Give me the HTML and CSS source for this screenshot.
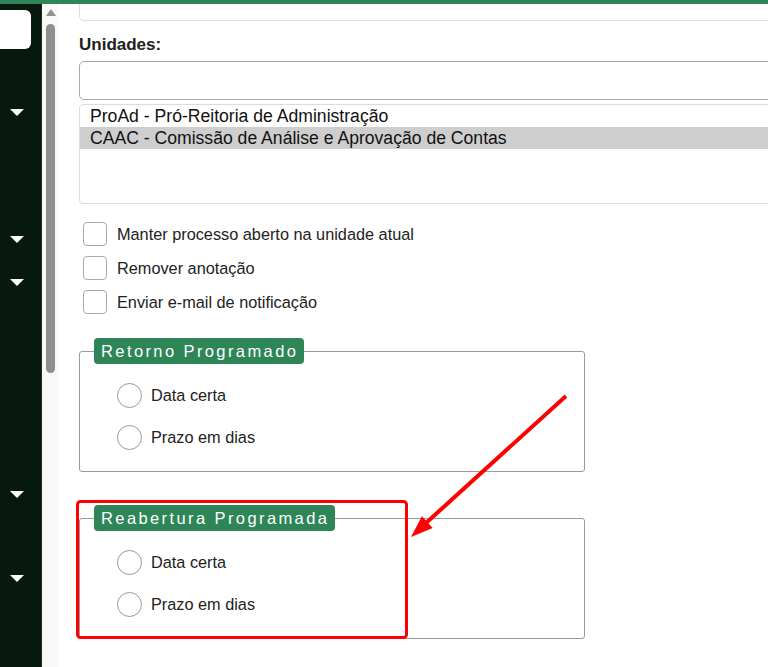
FILE: index.html
```html
<!DOCTYPE html>
<html lang="pt-BR">
<head>
  <meta charset="UTF-8">
  <meta name="viewport" content="width=device-width, initial-scale=1.0">
  <title>Enviar Processo</title>
  <link rel="stylesheet" href="styles.css">
</head>
<body>
  <div class="topbar"></div>

  <div class="layout">
    <nav class="sidebar">
      <div class="sidebar-search"></div>
      <div class="menu-item"></div>
      <div class="menu-item"><span class="caret"></span></div>
      <div class="menu-item"></div>
      <div class="menu-item"></div>
      <div class="menu-item"><span class="caret"></span></div>
      <div class="menu-item"><span class="caret"></span></div>
      <div class="menu-item"></div>
      <div class="menu-item"></div>
      <div class="menu-item"></div>
      <div class="menu-item"></div>
      <div class="menu-item"><span class="caret"></span></div>
      <div class="menu-item"></div>
      <div class="menu-item"><span class="caret"></span></div>
      <div class="menu-item"></div>
    </nav>

    <div class="gutter">
      <span class="gutter-arrow"></span>
      <span class="gutter-thumb"></span>
    </div>

    <main class="content">
      <div class="prev-input"></div>

      <label class="field-label" for="unitSearch">Unidades:</label>
      <input type="text" id="unitSearch" class="unit-search">

      <div class="unit-list">
        <div class="unit-option">ProAd - Pró-Reitoria de Administração</div>
        <div class="unit-option selected">CAAC - Comissão de Análise e Aprovação de Contas</div>
      </div>

      <div class="checks">
        <label class="check-row"><span class="check-box"></span>Manter processo aberto na unidade atual</label>
        <label class="check-row"><span class="check-box"></span>Remover anotação</label>
        <label class="check-row"><span class="check-box"></span>Enviar e-mail de notificação</label>
      </div>

      <fieldset class="schedule">
        <legend>Retorno Programado</legend>
        <label class="radio-row"><span class="radio"></span>Data certa</label>
        <label class="radio-row"><span class="radio"></span>Prazo em dias</label>
      </fieldset>

      <fieldset class="schedule schedule-second">
        <legend>Reabertura Programada</legend>
        <label class="radio-row"><span class="radio"></span>Data certa</label>
        <label class="radio-row"><span class="radio"></span>Prazo em dias</label>
      </fieldset>
    </main>
  </div>

  <!-- annotation drawn over the screenshot -->
  <svg class="annotation" width="768" height="667" viewBox="0 0 768 667">
    <rect x="77.5" y="501.5" width="329" height="136" rx="3" fill="none" stroke="#ff0000" stroke-width="3"/>
    <line x1="566" y1="396" x2="426" y2="523" stroke="#ff0000" stroke-width="4"/>
    <polygon points="411,537 421.9,516.3 432.7,528.1" fill="#ff0000"/>
  </svg>
</body>
</html>
```

FILE: styles.css
```css
:root {
  --green: #2e8658;
  --sidebar-bg: #07190f;
  --text-color: #222;
  --border-light: #dcdcdc;
  --border-mid: #a9a9a9;
}

html, body {
  margin: 0;
  height: 667px;
  overflow: hidden;
}

body {
  position: relative;
  font-family: "Liberation Sans", Arial, sans-serif;
  color: var(--text-color);
  background: #fff;
}

.topbar {
  height: 4px;
  background-color: var(--green);
}

.layout {
  display: flex;
  height: 663px;
}

/* Sidebar */
.sidebar {
  width: 41px;
  flex-shrink: 0;
  padding-top: 6px;
  background-color: var(--sidebar-bg);
  overflow: hidden;
}

.sidebar-search {
  width: 31px;
  height: 39px;
  background: #fff;
  border-radius: 0 6px 6px 0;
}

.menu-item {
  height: 42.4px;
  display: flex;
  align-items: center;
}

.caret {
  margin-left: 10px;
  width: 0;
  height: 0;
  border-left: 7px solid transparent;
  border-right: 7px solid transparent;
  border-top: 7px solid #fff;
}

/* Scrollbar gutter */
.gutter {
  width: 17px;
  flex-shrink: 0;
  box-sizing: border-box;
  padding: 5px 0 0 4px;
  background: #f8f8f8;
  border-left: 1px solid #1c2a22;
  display: flex;
  flex-direction: column;
}

.gutter-arrow {
  width: 0;
  height: 0;
  border-left: 5px solid transparent;
  border-right: 5px solid transparent;
  border-bottom: 7px solid #909090;
}

.gutter-thumb {
  margin-top: 8px;
  width: 9px;
  height: 349px;
  border-radius: 5px;
  background: #8e8e8e;
}

/* Main form */
.content {
  flex: 1;
  padding-left: 21px;
  overflow: hidden;
  display: flex;
  flex-direction: column;
  align-items: flex-start;
}

.prev-input {
  box-sizing: border-box;
  width: calc(100% + 20px);
  height: 17px;
  border: 1px solid var(--border-light);
  border-top: none;
  border-radius: 0 0 5px 5px;
}

.field-label {
  margin-top: 14px;
  font-size: 17px;
  font-weight: bold;
  line-height: 20px;
  color: #212121;
}

.unit-search {
  box-sizing: border-box;
  margin: 6px 0 0;
  width: calc(100% + 20px);
  height: 39px;
  border: 1px solid var(--border-mid);
  border-radius: 5px;
  background: #fff;
}

.unit-list {
  box-sizing: border-box;
  margin-top: 4px;
  width: calc(100% + 20px);
  height: 100px;
  border: 1px solid var(--border-light);
  border-radius: 4px;
  font-size: 17.6px;
  color: #111;
}

.unit-option {
  height: 22px;
  line-height: 22px;
  padding-left: 10px;
  white-space: nowrap;
}

.unit-option.selected {
  background-color: #cecece;
}

.checks {
  margin-top: 18px;
  margin-left: 4px;
  display: flex;
  flex-direction: column;
  gap: 10px;
}

.check-row {
  display: flex;
  align-items: center;
  gap: 10px;
  height: 24px;
  font-size: 16.3px;
}

.check-box {
  box-sizing: border-box;
  width: 24px;
  height: 24px;
  border: 1px solid var(--border-mid);
  border-radius: 4px;
  background: #fff;
}

.schedule {
  box-sizing: border-box;
  width: 506px;
  margin: 24px 0 0;
  padding: 19px 14px 21px;
  border: 1px solid #9a9a9a;
  border-radius: 3px;
  display: flex;
  flex-direction: column;
  gap: 17px;
}

.schedule-second {
  margin-top: 33px;
}

.schedule legend {
  padding: 3px 6px 3px 7px;
  line-height: 20px;
  font-size: 16.5px;
  letter-spacing: 2.4px;
  color: #fff;
  background-color: var(--green);
  border-radius: 4px;
}

.radio-row {
  display: flex;
  align-items: center;
  gap: 9px;
  margin-left: 23px;
  height: 25px;
  font-size: 16.3px;
}

.radio {
  box-sizing: border-box;
  width: 25px;
  height: 25px;
  border: 1px solid #999;
  border-radius: 50%;
  background: #fff;
}

.annotation {
  position: absolute;
  left: 0;
  top: 0;
  pointer-events: none;
}
```
